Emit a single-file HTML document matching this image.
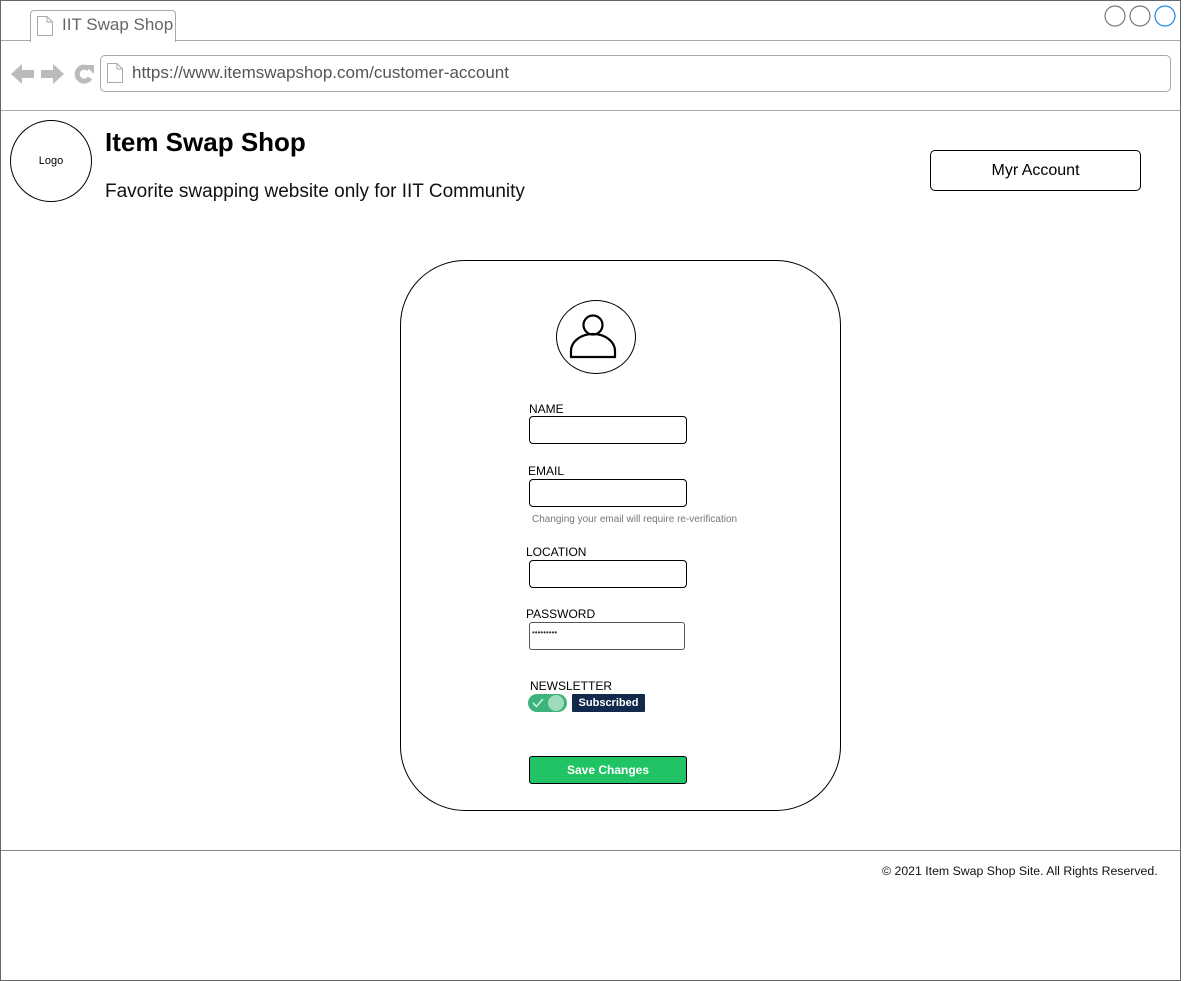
<!DOCTYPE html>
<html><head><meta charset="utf-8"><style>
body{margin:0;width:1201px;height:981px;background:#fff;font-family:"Liberation Sans",Arial,sans-serif;position:relative;overflow:hidden}
.a{position:absolute}
.inp{position:absolute;border:1px solid #000;border-radius:4px;background:#fff;box-sizing:border-box}
.lbl{position:absolute;font-size:12px;color:#000}
</style></head><body>
<div class="a" style="left:0;top:0;width:1179px;height:979px;border:1px solid #666"></div>
<div class="a" style="left:30px;top:10px;width:144px;height:31px;border:1px solid #aaa;border-bottom:none;border-radius:4px 4px 0 0;background:#fff"></div>
<div class="a" style="left:1px;top:40px;width:1179px;height:1px;background:#aaa"></div>
<div class="a" style="left:31px;top:40px;width:144px;height:2px;background:#fff"></div>
<svg class="a" style="left:36px;top:15px" width="18" height="22"><path d="M1.5 1.5H11L16.5 7V20.5H1.5Z M11 1.5V7H16.5" fill="#fff" stroke="#aaa"/></svg>
<div class="a" style="left:62px;top:15px;font-size:17px;color:#666">IIT Swap Shop</div>
<svg class="a" style="left:1103px;top:4px" width="75" height="24"><circle cx="12" cy="12" r="10" fill="none" stroke="#777" stroke-width="1.2"/><circle cx="37" cy="12" r="10" fill="none" stroke="#777" stroke-width="1.2"/><circle cx="62" cy="12" r="10" fill="none" stroke="#1e88e5" stroke-width="1.2"/></svg>
<svg class="a" style="left:10px;top:62px" width="85" height="24">
<path d="M1 12L12 2V8H24V16H12V22Z" fill="#bbb"/>
<path d="M54 12L43 2V8H31V16H43V22Z" fill="#bbb"/>
<path d="M79 7A7 7 0 1 0 80 16" fill="none" stroke="#bbb" stroke-width="5"/>
<path d="M75 3H84V12Z" fill="#bbb"/>
</svg>
<div class="a" style="left:100px;top:55px;width:1069px;height:35px;border:1px solid #aaa;border-radius:5px"></div>
<svg class="a" style="left:106px;top:62px" width="18" height="22"><path d="M1.5 1.5H11L16.5 7V20.5H1.5Z M11 1.5V7H16.5" fill="#fff" stroke="#aaa"/></svg>
<div class="a" style="left:132px;top:63px;font-size:17px;color:#555">https://www.itemswapshop.com/customer-account</div>
<div class="a" style="left:1px;top:110px;width:1179px;height:1px;background:#aaa"></div>
<div class="a" style="left:10px;top:120px;width:80px;height:80px;border:1px solid #000;border-radius:50%;text-align:center;line-height:80px;font-size:11px">Logo</div>
<div class="a" style="left:105px;top:127px;font-size:26px;font-weight:bold">Item Swap Shop</div>
<div class="a" style="left:105px;top:181px;font-size:19px;color:#111">Favorite swapping website only for IIT Community</div>
<div class="a" style="left:930px;top:150px;width:209px;height:39px;border:1px solid #000;border-radius:5px;text-align:center;line-height:39px;font-size:16px">Myr Account</div>
<div class="a" style="left:400px;top:260px;width:439px;height:549px;border:1px solid #000;border-radius:65px"></div>
<div class="a" style="left:556px;top:300px;width:78px;height:72px;border:1px solid #000;border-radius:50%"></div>
<svg class="a" style="left:568px;top:312px" width="52" height="48"><circle cx="25" cy="13" r="9.5" fill="none" stroke="#000" stroke-width="2.2"/><path d="M3 45V39A22 17 0 0 1 47 39V45Z" fill="none" stroke="#000" stroke-width="2.2"/></svg>
<div class="lbl" style="left:529px;top:402px">NAME</div>
<div class="inp" style="left:529px;top:416px;width:158px;height:28px"></div>
<div class="lbl" style="left:528px;top:464px">EMAIL</div>
<div class="inp" style="left:529px;top:479px;width:158px;height:28px"></div>
<div class="a" style="left:532px;top:514px;font-size:10px;color:#777">Changing your email will require re-verification</div>
<div class="lbl" style="left:526px;top:545px">LOCATION</div>
<div class="inp" style="left:529px;top:560px;width:158px;height:28px"></div>
<div class="lbl" style="left:526px;top:607px">PASSWORD</div>
<div class="inp" style="left:529px;top:622px;width:156px;height:28px;border-color:#555;border-radius:3px;font-size:8px;padding:5px 2px;color:#333">•••••••••</div>
<div class="lbl" style="left:530px;top:679px">NEWSLETTER</div>
<div class="a" style="left:528px;top:694px;width:39px;height:18px;border-radius:9px;background:#3cb37a"></div>
<div class="a" style="left:548px;top:695px;width:16px;height:16px;border-radius:50%;background:#9fdcbd"></div>
<svg class="a" style="left:532px;top:697px" width="12" height="12"><path d="M1 6L4.5 9.5L11 2" fill="none" stroke="#c8f0da" stroke-width="1.6"/></svg>
<div class="a" style="left:572px;top:694px;width:73px;height:18px;background:#13294b;color:#fff;font-size:11px;font-weight:bold;text-align:center;line-height:18px;border-radius:1px">Subscribed</div>
<div class="a" style="left:529px;top:756px;width:158px;height:28px;box-sizing:border-box;border:1px solid #000;border-radius:3px;background:#21c464;color:#fff;font-size:12px;font-weight:bold;text-align:center;line-height:26px">Save Changes</div>
<div class="a" style="left:1px;top:850px;width:1179px;height:1px;background:#888"></div>
<div class="a" style="left:882px;top:864px;font-size:12.3px;color:#111">© 2021 Item Swap Shop Site. All Rights Reserved.</div>
</body></html>
